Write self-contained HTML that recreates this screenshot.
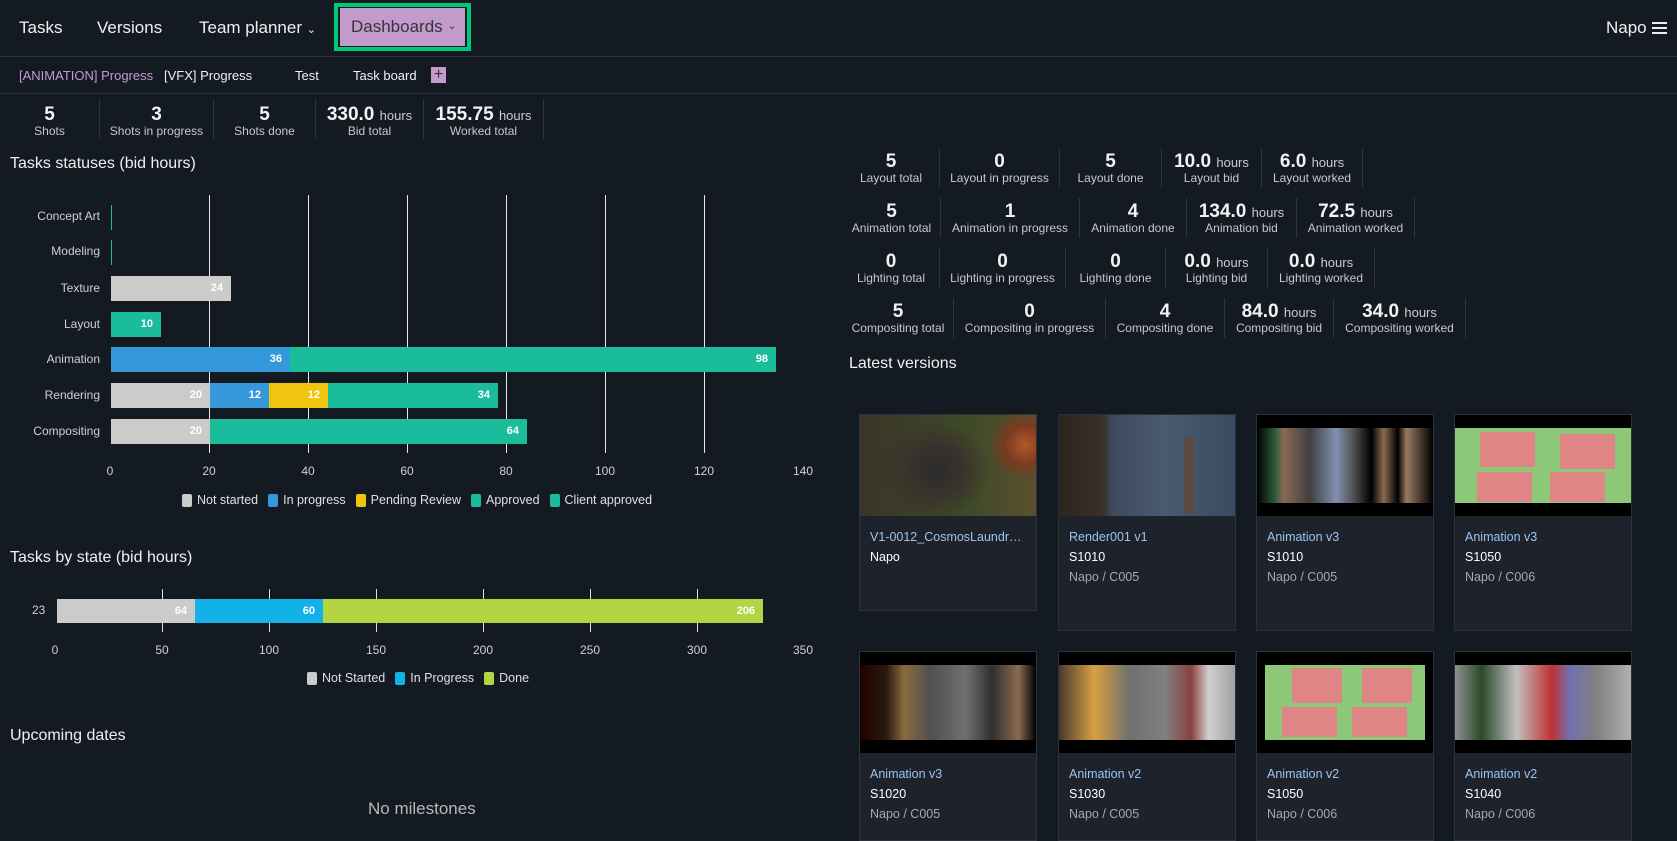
<!DOCTYPE html>
<html><head><meta charset="utf-8"><style>
*{margin:0;padding:0;box-sizing:border-box}
body{width:1677px;height:830px;overflow:hidden;background:#141a22;color:#e8e8e8;font-family:"Liberation Sans",sans-serif;position:relative}
.a{position:absolute;white-space:nowrap}
.nav{font-size:17px;color:#f0f0f0;top:18px}
.sub{font-size:13px;top:68px;color:#f0f0f0}
.st{position:absolute;text-align:center;border-right:1px solid #2e343c;line-height:1}
.st b{display:block;font-size:19px;color:#f2f2f2}
.st b i{font-style:normal;font-weight:normal;font-size:13px;color:#ccc}
.st span{display:block;font-size:12px;color:#c8c8c8;margin-top:1px}
.row{position:absolute;left:843px;display:flex;height:40px}
.row .st{position:relative;height:40px;padding-top:4px}
.h{font-size:16px;color:#f0f0f0}
.lab{font-size:12px;color:#d0d0d0;text-align:right;width:100px;left:0}
.bar{position:absolute;height:25px;color:#fff;font-weight:bold;font-size:11px;text-align:right;padding-right:8px;line-height:25px}
.g{background:#cbcbcb}.b{background:#3498db}.y{background:#f1c40f}.t{background:#1abc9c}
.grid{position:absolute;top:195px;height:258px;width:1px;background:#e8e8e8}
.ax{font-size:12px;color:#d0d0d0;transform:translateX(-50%)}
.leg{display:flex;align-items:center;font-size:12.5px;color:#e0e0e0}
.leg i{display:inline-block;width:10px;height:13px;border-radius:2px;margin-right:5px}
.leg span{margin-right:10px}
.card{position:absolute;width:178px;background:#1e232b;border:1px solid #2c323b}
.th{height:101px;position:relative;overflow:hidden;background:#000}
.ct{padding:11px 10px 0;font-size:12.5px;line-height:20px}
.ct div{white-space:nowrap;overflow:hidden;text-overflow:ellipsis}
.ct .n{color:#9cc4f0}
.ct .s{color:#fff}
.ct .p{color:#a8a8a8}
.frame{position:absolute;left:0;right:0;top:13px;bottom:13px}
</style></head><body>
<div class="a nav" style="left:19px">Tasks</div>
<div class="a nav" style="left:97px">Versions</div>
<div class="a nav" style="left:199px">Team planner <span style="font-size:11px">&#8964;</span></div>
<div class="a" style="left:334px;top:3px;width:137px;height:48px;border:4px solid #00c97c"></div>
<div class="a" style="left:340px;top:8px;width:125px;height:38px;background:#c39bca;color:#3a3240;font-size:17px;line-height:38px;padding-left:11px">Dashboards <span style="font-size:11px;position:relative;top:-3px">&#8964;</span></div>
<div class="a nav" style="left:1606px">Napo</div>
<div class="a" style="left:1652px;top:22px;width:15px;height:2px;background:#eee;box-shadow:0 5px 0 #eee,0 10px 0 #eee"></div>
<div class="a" style="left:0;top:56px;width:1677px;height:1px;background:#2a3038"></div>
<div class="a sub" style="left:19px;color:#c39bd0">[ANIMATION] Progress</div>
<div class="a sub" style="left:164px">[VFX] Progress</div>
<div class="a sub" style="left:295px">Test</div>
<div class="a sub" style="left:353px">Task board</div>
<div class="a" style="left:431px;top:67px;width:15px;height:16px;background:#c39bca;color:#333;font-size:16px;line-height:15px;text-align:center">+</div>
<div class="a" style="left:0;top:93px;width:1677px;height:1px;background:#2a3038"></div>
<div class="st" style="left:0;top:99px;width:100px;height:40px;padding-top:6px"><b>5</b><span>Shots</span></div>
<div class="st" style="left:100px;top:99px;width:114px;height:40px;padding-top:6px"><b>3</b><span>Shots in progress</span></div>
<div class="st" style="left:214px;top:99px;width:102px;height:40px;padding-top:6px"><b>5</b><span>Shots done</span></div>
<div class="st" style="left:316px;top:99px;width:108px;height:40px;padding-top:6px"><b>330.0 <i>hours</i></b><span>Bid total</span></div>
<div class="st" style="left:424px;top:99px;width:120px;height:40px;padding-top:6px"><b>155.75 <i>hours</i></b><span>Worked total</span></div>

<div class="a h" style="left:10px;top:155px">Tasks statuses (bid hours)</div>
<div class="grid" style="left:209px"></div><div class="grid" style="left:308px"></div><div class="grid" style="left:407px"></div><div class="grid" style="left:506px"></div><div class="grid" style="left:605px"></div><div class="grid" style="left:704px"></div>
<div class="a lab" style="top:209px">Concept Art</div>
<div class="a lab" style="top:244px">Modeling</div>
<div class="a lab" style="top:281px">Texture</div>
<div class="a lab" style="top:317px">Layout</div>
<div class="a lab" style="top:352px">Animation</div>
<div class="a lab" style="top:388px">Rendering</div>
<div class="a lab" style="top:424px">Compositing</div>
<div class="a" style="left:111px;top:205px;width:1px;height:25px;background:#1abc9c"></div>
<div class="a" style="left:111px;top:240px;width:1px;height:25px;background:#1abc9c"></div>
<div class="bar g" style="left:111px;top:276px;width:120px">24</div>
<div class="bar t" style="left:111px;top:312px;width:50px">10</div>
<div class="bar b" style="left:111px;top:347px;width:179px">36</div>
<div class="bar t" style="left:290px;top:347px;width:486px">98</div>
<div class="bar g" style="left:111px;top:383px;width:99px">20</div>
<div class="bar b" style="left:210px;top:383px;width:59px">12</div>
<div class="bar y" style="left:269px;top:383px;width:59px">12</div>
<div class="bar t" style="left:328px;top:383px;width:170px">34</div>
<div class="bar g" style="left:111px;top:419px;width:99px">20</div>
<div class="bar t" style="left:210px;top:419px;width:317px">64</div>
<div class="a ax" style="left:110px;top:464px">0</div><div class="a ax" style="left:209px;top:464px">20</div><div class="a ax" style="left:308px;top:464px">40</div><div class="a ax" style="left:407px;top:464px">60</div><div class="a ax" style="left:506px;top:464px">80</div><div class="a ax" style="left:605px;top:464px">100</div><div class="a ax" style="left:704px;top:464px">120</div><div class="a ax" style="left:803px;top:464px">140</div>
<div class="a leg" style="left:182px;top:493px"><i style="background:#cbcbcb"></i><span>Not started</span><i style="background:#3498db"></i><span>In progress</span><i style="background:#f1c40f"></i><span>Pending Review</span><i style="background:#1abc9c"></i><span>Approved</span><i style="background:#1abc9c"></i><span>Client approved</span></div>

<div class="a h" style="left:10px;top:549px">Tasks by state (bid hours)</div>
<div class="a" style="left:162px;top:589px;width:1px;height:43px;background:#ddd"></div>
<div class="a" style="left:269px;top:589px;width:1px;height:43px;background:#ddd"></div>
<div class="a" style="left:376px;top:589px;width:1px;height:43px;background:#ddd"></div>
<div class="a" style="left:483px;top:589px;width:1px;height:43px;background:#ddd"></div>
<div class="a" style="left:590px;top:589px;width:1px;height:43px;background:#ddd"></div>
<div class="a" style="left:697px;top:589px;width:1px;height:43px;background:#ddd"></div>
<div class="a" style="left:32px;top:603px;font-size:12px;color:#d0d0d0">23</div>
<div class="bar" style="left:57px;top:599px;width:138px;height:24px;line-height:24px;background:#cbcbcb">64</div>
<div class="bar" style="left:195px;top:599px;width:128px;height:24px;line-height:24px;background:#12b1e8">60</div>
<div class="bar" style="left:323px;top:599px;width:440px;height:24px;line-height:24px;background:#b3d443">206</div>
<div class="a ax" style="left:55px;top:643px">0</div><div class="a ax" style="left:162px;top:643px">50</div><div class="a ax" style="left:269px;top:643px">100</div><div class="a ax" style="left:376px;top:643px">150</div><div class="a ax" style="left:483px;top:643px">200</div><div class="a ax" style="left:590px;top:643px">250</div><div class="a ax" style="left:697px;top:643px">300</div><div class="a ax" style="left:803px;top:643px">350</div>
<div class="a leg" style="left:307px;top:671px"><i style="background:#cbcbcb"></i><span>Not Started</span><i style="background:#12b1e8"></i><span>In Progress</span><i style="background:#b3d443"></i><span>Done</span></div>

<div class="a h" style="left:10px;top:727px">Upcoming dates</div>
<div class="a" style="left:368px;top:799px;font-size:17px;color:#b8b8b8">No milestones</div>

<div class="row" style="top:148px">
<div class="st" style="width:97px"><b>5</b><span>Layout total</span></div>
<div class="st" style="width:120px"><b>0</b><span>Layout in progress</span></div>
<div class="st" style="width:102px"><b>5</b><span>Layout done</span></div>
<div class="st" style="width:100px"><b>10.0 <i>hours</i></b><span>Layout bid</span></div>
<div class="st" style="width:101px"><b>6.0 <i>hours</i></b><span>Layout worked</span></div>
</div>
<div class="row" style="top:198px">
<div class="st" style="width:98px"><b>5</b><span>Animation total</span></div>
<div class="st" style="width:139px"><b>1</b><span>Animation in progress</span></div>
<div class="st" style="width:107px"><b>4</b><span>Animation done</span></div>
<div class="st" style="width:110px"><b>134.0 <i>hours</i></b><span>Animation bid</span></div>
<div class="st" style="width:118px"><b>72.5 <i>hours</i></b><span>Animation worked</span></div>
</div>
<div class="row" style="top:248px">
<div class="st" style="width:97px"><b>0</b><span>Lighting total</span></div>
<div class="st" style="width:126px"><b>0</b><span>Lighting in progress</span></div>
<div class="st" style="width:100px"><b>0</b><span>Lighting done</span></div>
<div class="st" style="width:102px"><b>0.0 <i>hours</i></b><span>Lighting bid</span></div>
<div class="st" style="width:107px"><b>0.0 <i>hours</i></b><span>Lighting worked</span></div>
</div>
<div class="row" style="top:298px">
<div class="st" style="width:111px"><b>5</b><span>Compositing total</span></div>
<div class="st" style="width:152px"><b>0</b><span>Compositing in progress</span></div>
<div class="st" style="width:119px"><b>4</b><span>Compositing done</span></div>
<div class="st" style="width:109px"><b>84.0 <i>hours</i></b><span>Compositing bid</span></div>
<div class="st" style="width:132px"><b>34.0 <i>hours</i></b><span>Compositing worked</span></div>
</div>
<div class="a h" style="left:849px;top:355px">Latest versions</div>

<div class="card" style="left:859px;top:414px;height:197px">
<div class="th" style="background:radial-gradient(ellipse 55px 50px at 75px 55px,#2a2a2e 0%,#3a332c 50%,transparent 100%),radial-gradient(circle at 165px 30px,#b05a2a 0,#7a3a20 20px,transparent 35px),linear-gradient(90deg,#3a3428,#3e4a28 60%,#5a5030)"></div>
<div class="ct"><div class="n">V1-0012_CosmosLaundromat</div><div class="s">Napo</div></div></div>
<div class="card" style="left:1058px;top:414px;height:217px">
<div class="th" style="background:linear-gradient(90deg,#2a2520 0,#3a3028 25%,#3d4a5e 30%,#4a5a70 60%,#3a4a60)"><div style="position:absolute;left:125px;top:22px;width:10px;height:76px;background:#5a4a40"></div></div>
<div class="ct"><div class="n">Render001 v1</div><div class="s">S1010</div><div class="p">Napo / C005</div></div></div>
<div class="card" style="left:1256px;top:414px;height:217px">
<div class="th"><div class="frame" style="background:linear-gradient(90deg,#000 0,#2a5a3a 10%,#8a6a50 15%,#404040 30%,#8090b0 45%,#505050 55%,#000 65%,#8a6a50 72%,#000 80%,#9a7a60 85%,#000)"></div></div>
<div class="ct"><div class="n">Animation v3</div><div class="s">S1010</div><div class="p">Napo / C005</div></div></div>
<div class="card" style="left:1454px;top:414px;height:217px">
<div class="th"><div class="frame" style="background:#8cc878"><div style="position:absolute;left:25px;top:4px;width:55px;height:35px;background:#e08585"></div><div style="position:absolute;left:105px;top:6px;width:55px;height:35px;background:#e08585"></div><div style="position:absolute;left:22px;top:44px;width:55px;height:30px;background:#e08585"></div><div style="position:absolute;left:95px;top:44px;width:55px;height:30px;background:#e08585"></div></div></div>
<div class="ct"><div class="n">Animation v3</div><div class="s">S1050</div><div class="p">Napo / C006</div></div></div>

<div class="card" style="left:859px;top:651px;height:190px">
<div class="th"><div class="frame" style="background:linear-gradient(90deg,#200 0,#2a1a10 15%,#8a6a40 25%,#505050 40%,#707070 60%,#303030 75%,#8a6a50 90%,#000)"></div></div>
<div class="ct"><div class="n">Animation v3</div><div class="s">S1020</div><div class="p">Napo / C005</div></div></div>
<div class="card" style="left:1058px;top:651px;height:190px">
<div class="th"><div class="frame" style="background:linear-gradient(90deg,#4a3a30 0,#d8a040 20%,#707070 40%,#808080 60%,#8a4040 75%,#d0d0d0 85%,#a0a0a0)"></div></div>
<div class="ct"><div class="n">Animation v2</div><div class="s">S1030</div><div class="p">Napo / C005</div></div></div>
<div class="card" style="left:1256px;top:651px;height:190px">
<div class="th"><div class="frame" style="background:#000"><div style="position:absolute;left:8px;right:8px;top:0;bottom:0;background:#8cc878"></div><div style="position:absolute;left:35px;top:3px;width:50px;height:35px;background:#e08585"></div><div style="position:absolute;left:105px;top:3px;width:50px;height:35px;background:#e08585"></div><div style="position:absolute;left:25px;top:42px;width:55px;height:30px;background:#e08585"></div><div style="position:absolute;left:95px;top:42px;width:55px;height:30px;background:#e08585"></div></div></div>
<div class="ct"><div class="n">Animation v2</div><div class="s">S1050</div><div class="p">Napo / C006</div></div></div>
<div class="card" style="left:1454px;top:651px;height:190px">
<div class="th"><div class="frame" style="background:linear-gradient(90deg,#909090 0,#2a4a2a 15%,#c0c0c0 35%,#c03030 55%,#7070b0 65%,#808080 80%,#b0b0b0)"></div></div>
<div class="ct"><div class="n">Animation v2</div><div class="s">S1040</div><div class="p">Napo / C006</div></div></div>
</body></html>
